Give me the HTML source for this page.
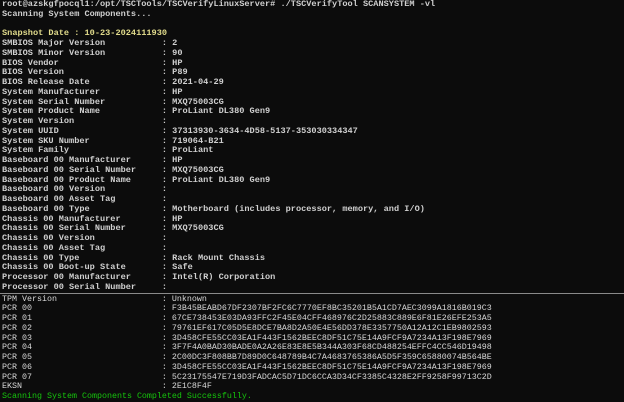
<!DOCTYPE html>
<html><head><meta charset="utf-8"><style>
html,body{margin:0;padding:0;background:#0c0c0c;width:624px;height:401px;overflow:hidden}
pre{margin:0;position:absolute;left:2px;font-family:"Liberation Mono",monospace;white-space:pre;color:#d8d8d8;line-height:9.75px}
#a{top:0;font-size:8.6px;font-weight:bold;color:#d0d0d0}
#b{top:294.5px;font-size:8.33px}
.y{color:#e2dc8c}.g{color:#16c60c}
#sep{position:absolute;left:0;top:293px;width:624px;height:1px;background:#8a8a8a}
</style></head><body>
<pre id="a">root@azskgfpocql1:/opt/TSCTools/TSCVerifyLinuxServer# ./TSCVerifyTool SCANSYSTEM -vl
Scanning System Components...

<span class="y">Snapshot Date : 10-23-2024111930</span>
SMBIOS Major Version           : 2
SMBIOS Minor Version           : 90
BIOS Vendor                    : HP
BIOS Version                   : P89
BIOS Release Date              : 2021-04-29
System Manufacturer            : HP
System Serial Number           : MXQ75003CG
System Product Name            : ProLiant DL380 Gen9
System Version                 :
System UUID                    : 37313930-3634-4D58-5137-353030334347
System SKU Number              : 719064-B21
System Family                  : ProLiant
Baseboard 00 Manufacturer      : HP
Baseboard 00 Serial Number     : MXQ75003CG
Baseboard 00 Product Name      : ProLiant DL380 Gen9
Baseboard 00 Version           :
Baseboard 00 Asset Tag         :
Baseboard 00 Type              : Motherboard (includes processor, memory, and I/O)
Chassis 00 Manufacturer        : HP
Chassis 00 Serial Number       : MXQ75003CG
Chassis 00 Version             :
Chassis 00 Asset Tag           :
Chassis 00 Type                : Rack Mount Chassis
Chassis 00 Boot-up State       : Safe
Processor 00 Manufacturer      : Intel(R) Corporation
Processor 00 Serial Number     :</pre>
<div id="sep"></div>
<pre id="b">TPM Version                     : Unknown
PCR 00                          : F3B45BEABD67DF2307BF2FC6C7770EF8BC35201B5A1CD7AEC3099A1816B019C3
PCR 01                          : 67CE738453E03DA93FFC2F45E04CFF468976C2D25883C889E6F81E26EFE253A5
PCR 02                          : 79761EF617C05D5E8DCE7BA8D2A50E4E56DD378E3357750A12A12C1EB9802593
PCR 03                          : 3D458CFE55CC03EA1F443F1562BEEC8DF51C75E14A9FCF9A7234A13F198E7969
PCR 04                          : 3F7F4A0BAD30BADE0A2A26E83E8E5B344A303F68CD488254EFFC4CC546D19498
PCR 05                          : 2C00DC3F808BB7D89D0C648789B4C7A4683765386A5D5F359C65880074B564BE
PCR 06                          : 3D458CFE55CC03EA1F443F1562BEEC8DF51C75E14A9FCF9A7234A13F198E7969
PCR 07                          : 5C23175547E719D3FADCAC5D71DC6CCA3D34CF3385C4328E2FF9258F99713C2D
EKSN                            : 2E1C8F4F
<span class="g">Scanning System Components Completed Successfully.</span></pre>
</body></html>
